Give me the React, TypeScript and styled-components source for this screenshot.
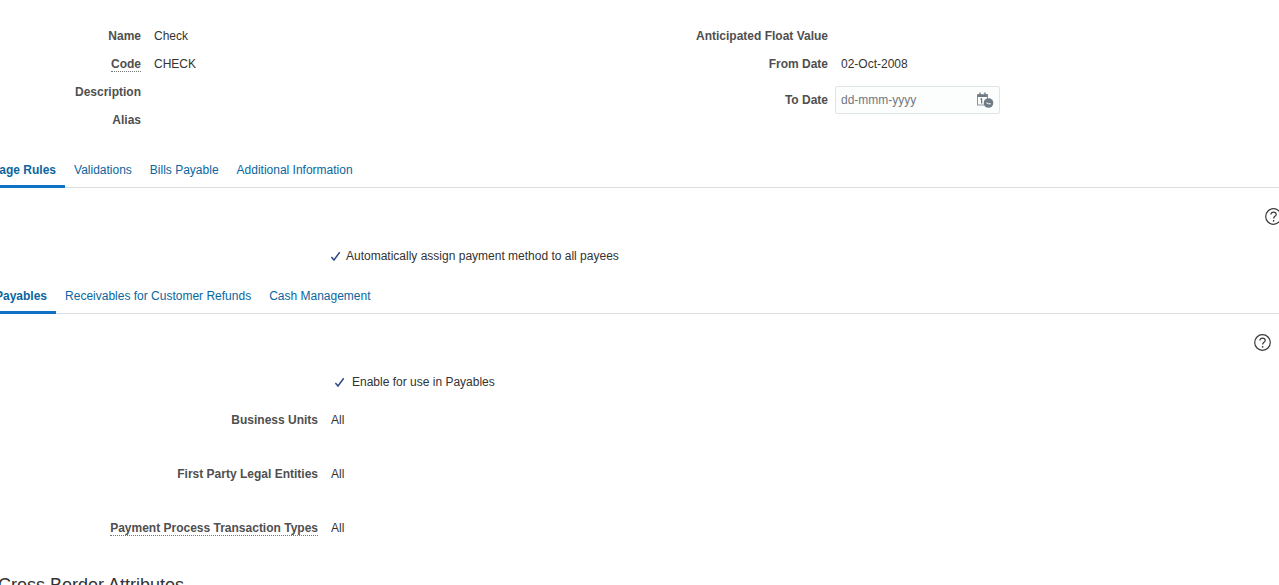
import styled, { createGlobalStyle } from "styled-components";

const GlobalStyle = createGlobalStyle`
  html, body {
    margin: 0;
    padding: 0;
    background: #fff;
    overflow: hidden;
  }
  body {
    font-family: "Liberation Sans", Arial, sans-serif;
    font-size: 12px;
    color: #333;
  }
`;

const Viewport = styled.div`
  width: 1279px;
  height: 585px;
  overflow: hidden;
`;

const Page = styled.div`
  width: 1307px;
  margin-left: -25px;
`;

const Header = styled.div`
  display: flex;
  padding-top: 22px;
`;

const FormColumn = styled.div<{ $width: number; $labels: number }>`
  width: ${(p) => p.$width}px;
  flex: none;
  display: grid;
  grid-template-columns: ${(p) => p.$labels}px 1fr;
  column-gap: 13px;
  align-content: start;
`;

const Label = styled.div`
  min-height: 28px;
  display: flex;
  align-items: center;
  justify-content: flex-end;
  font-weight: 700;
  color: #4f4f4f;
  white-space: nowrap;
`;

const Hint = styled.span`
  border-bottom: 1px dotted #777;
  line-height: 14px;
  margin-bottom: -1px;
`;

const Value = styled.div`
  min-height: 28px;
  display: flex;
  align-items: center;
  color: #333;
`;

const DateField = styled.div`
  box-sizing: border-box;
  width: 165px;
  height: 28px;
  margin: 8px 0 8px -6px;
  padding: 0 5px 0 5px;
  display: flex;
  align-items: center;
  justify-content: space-between;
  background: #fcfdfd;
  border: 1px solid #dfe4e8;
  border-radius: 2px;
`;

const DateInput = styled.input`
  width: 120px;
  border: 0;
  padding: 0;
  outline: none;
  background: transparent;
  font: 12px "Liberation Sans", Arial, sans-serif;
  &::placeholder {
    color: #70787f;
    opacity: 1;
  }
`;

const TabBar = styled.div<{ $top: number }>`
  display: flex;
  margin-top: ${(p) => p.$top}px;
  border-bottom: 1px solid #d9dfe3;
`;

const Tab = styled.div<{ $active?: boolean }>`
  height: 30px;
  padding: 0 9px;
  display: flex;
  align-items: center;
  margin-top: 2px;
  margin-bottom: -1px;
  border-bottom: 3px solid ${(p) => (p.$active ? "#0f72c4" : "transparent")};
  color: #0a66a0;
  font-weight: ${(p) => (p.$active ? 700 : 400)};
  white-space: nowrap;
`;

const HelpRow = styled.div<{ $right: number }>`
  display: flex;
  justify-content: flex-end;
  padding: 20px ${(p) => p.$right}px 17px 0;
  height: 17px;
`;

const CheckRow = styled.div<{ $indent: number; $box: number }>`
  height: 28px;
  margin-left: ${(p) => p.$indent}px;
  display: grid;
  grid-template-columns: ${(p) => p.$box}px 1fr;
  align-items: center;
  color: #333;
`;

const CheckBox = styled.span`
  display: flex;
`;

const InnerPanel = styled.div`
  margin-left: 11px;
`;

const Attributes = styled.div`
  margin-top: 10px;
  display: grid;
  grid-template-columns: 332px 1fr;
  column-gap: 13px;
  row-gap: 26px;
`;

const SectionTitle = styled.h2`
  margin: 32px 0 0 12px;
  font-size: 18px;
  font-weight: 400;
  color: #333;
  line-height: 22px;
`;

const HelpIcon = () => (
  <svg width="17" height="17" viewBox="0 0 17 17" fill="none" stroke="#3a3a3a" strokeWidth="1.2">
    <circle cx="8.5" cy="8.5" r="7.8" />
    <path d="M5.9 6.6c0-1.5 1.2-2.5 2.7-2.5s2.6 1 2.6 2.3c0 1.9-2.6 2-2.6 4.2" />
    <path d="M8.6 12v1.6" strokeWidth="1.4" />
  </svg>
);

const CheckMark = () => (
  <svg width="11" height="11" viewBox="0 0 11 11" fill="none" stroke="#2f4a85" strokeWidth="1.5">
    <path d="M1.4 6l2.6 3L9.7 1.2" />
  </svg>
);

const CalendarIcon = () => (
  <svg width="18" height="16" viewBox="0 0 18 16" fill="none">
    <rect x="1.5" y="2.5" width="10" height="10.5" stroke="#8a949c" />
    <path d="M1.5 3h10v2h-10z" fill="#6f7b84" />
    <path d="M4 0.5v2.5M9 0.5v2.5" stroke="#6f7b84" strokeWidth="1.4" />
    <path d="M4.5 7.2l1.2-.7v5" stroke="#555" />
    <circle cx="12.5" cy="11" r="4.8" fill="#6f7b84" />
    <path d="M10.4 10.8l2.2 1h2.2" stroke="#fff" />
  </svg>
);

export default function App() {
  return (
    <Viewport>
      <GlobalStyle />
      <Page>
        <Header>
          <FormColumn $width={683} $labels={166}>
            <Label>Name</Label>
            <Value>Check</Value>
            <Label>
              <Hint>Code</Hint>
            </Label>
            <Value>CHECK</Value>
            <Label>Description</Label>
            <Value />
            <Label>Alias</Label>
            <Value />
          </FormColumn>
          <FormColumn $width={400} $labels={170}>
            <Label>Anticipated Float Value</Label>
            <Value />
            <Label>From Date</Label>
            <Value>02-Oct-2008</Value>
            <Label>To Date</Label>
            <DateField>
              <DateInput placeholder="dd-mmm-yyyy" />
              <CalendarIcon />
            </DateField>
          </FormColumn>
        </Header>

        <TabBar $top={19}>
          <Tab $active>Usage Rules</Tab>
          <Tab>Validations</Tab>
          <Tab>Bills Payable</Tab>
          <Tab>Additional Information</Tab>
        </TabBar>

        <HelpRow $right={0}>
          <HelpIcon />
        </HelpRow>

        <CheckRow $indent={355} $box={16}>
          <CheckBox>
            <CheckMark />
          </CheckBox>
          Automatically assign payment method to all payees
        </CheckRow>

        <InnerPanel>
          <TabBar $top={9}>
            <Tab $active>Payables</Tab>
            <Tab>Receivables for Customer Refunds</Tab>
            <Tab>Cash Management</Tab>
          </TabBar>

          <HelpRow $right={11}>
            <HelpIcon />
          </HelpRow>

          <CheckRow $indent={348} $box={18}>
            <CheckBox>
              <CheckMark />
            </CheckBox>
            Enable for use in Payables
          </CheckRow>

          <Attributes>
            <Label>Business Units</Label>
            <Value>All</Value>
            <Label>First Party Legal Entities</Label>
            <Value>All</Value>
            <Label>
              <Hint>Payment Process Transaction Types</Hint>
            </Label>
            <Value>All</Value>
          </Attributes>

          <SectionTitle>Cross Border Attributes</SectionTitle>
        </InnerPanel>
      </Page>
    </Viewport>
  );
}
